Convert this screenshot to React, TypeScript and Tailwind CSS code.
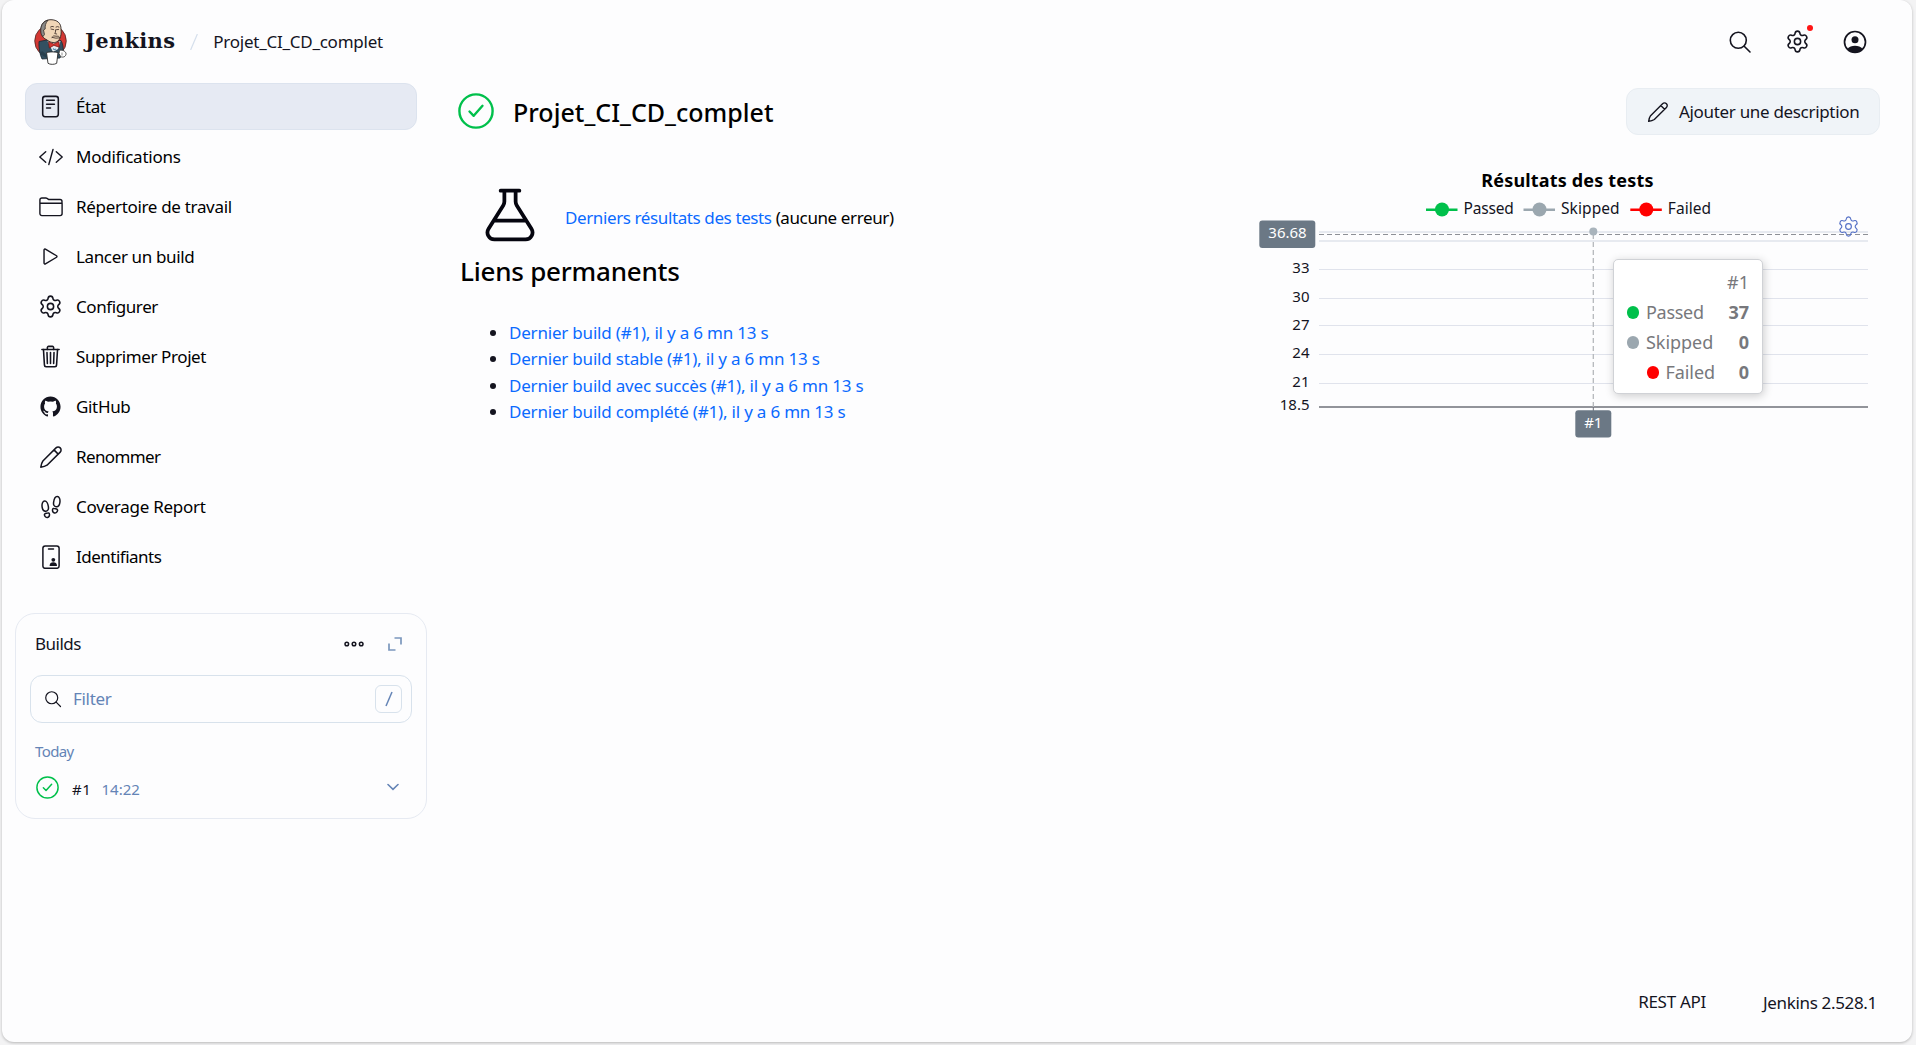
import React from 'react';
import { Settings } from 'lucide-react';
import {
  IoFlaskOutline,
  IoFootstepsOutline,
  IoLogoGithub,
  IoPlayOutline,
  IoReaderOutline,
  IoTrashOutline,
} from 'react-icons/io5';

function JenkinsLogo() {
  return (
    <svg viewBox="0 0 33 46" className="h-[46px] w-[33px] shrink-0">
      <ellipse cx="16.5" cy="22" rx="15.8" ry="16" fill="#d33833" stroke="#3a1f1c" strokeWidth=".7" />
      <path d="M5 22.5 L13 21 L20 23 L27 21.5 C29 25 29.5 29 29 33 L26 39 L8 40 C6 36 4.5 29 5 22.5 Z" fill="#335061" stroke="#1b2a33" strokeWidth=".8" />
      <path d="M13.5 22 L20 23 L26.5 22 L24 30 L19 33 Z" fill="#e9eef1" />
      <path d="M7 11 C6.500 4 11.500 .6 17 .7 C23 .8 27.300 4 27 10.500 C27.600 15 26.600 20.500 23 22.800 C20 24.300 15.500 23.500 12.500 20.500 C9 19.500 7 15.500 7 11 Z" fill="#f0d6b7" stroke="#2b2320" strokeWidth=".9" />
      <path d="M7 14 C6 6.500 9 2.500 14 1.300 C11.500 4 11 7 11.200 10 L9.500 11 L10.500 15.500 L9 17.500 C7.800 16.500 7.200 15.500 7 14 Z" fill="#8b8a88" stroke="#2b2320" strokeWidth=".7" />
      <path d="M17 10 l2.600 .6 M22 10.800 l2.600 -.4 M16.500 8 q1.500 -1.200 3 -.4 M22 8 q1.500 -1 3 0 M18 18.400 q1.500 -2.600 4 -1.200 q3 -.8 4 1.600 q-4 1 -8 -.4 M21.500 11 q.5 2.500 -.8 3.500 l2 .5" fill="none" stroke="#4a3a32" strokeWidth=".9" strokeLinecap="round" />
      <path d="M14.500 22.800 L19.800 25 L25 22.600 L25.300 28.200 L19.900 26.400 L15.300 29 Z" fill="#d33833" stroke="#6d1512" strokeWidth=".7" />
      <path d="M19 29.500 q2 2 3 .3" stroke="#5d8fb0" strokeWidth="1.200" fill="none" />
      <path d="M12.500 33.500 C15 32.700 21 32.700 24 33.500 L22.700 44.300 C20.500 45.700 16 45.700 14 44.300 Z" fill="#fff" stroke="#2b2b2b" strokeWidth=".9" />
      <path d="M25.500 31.500 C28 30.500 31.500 32 32 34.500 C32.200 37.500 29 39 26.500 37.500 L25 34.500 Z" fill="#fff" stroke="#3b3b3b" strokeWidth=".9" />
      <path d="M28 33.500 v3" stroke="#777" strokeWidth=".8" />
      <path d="M6 35 L12.800 39 L13 36 L8 32" fill="#28404e" />
    </svg>
  );
}

function CodeIcon() {
  return (
    <svg viewBox="0 0 24 24" className="size-6" fill="none" stroke="currentColor" strokeWidth="1.4" strokeLinecap="round" strokeLinejoin="round">
      <path d="M6.700 6.700 L.8 12 L6.700 17.300 M17.300 6.700 L23.200 12 L17.300 17.300 M14 4.500 L9.800 19.500" />
    </svg>
  );
}

function FolderIcon() {
  return (
    <svg viewBox="0 0 24 24" className="size-6" fill="none" stroke="currentColor" strokeWidth="1.4" strokeLinejoin="round">
      <path d="M.9 8.800 V5 a2 2 0 0 1 2 -2 H6.900 a2 2 0 0 1 1.200 .4 l1 .7 a2 2 0 0 0 1.200 .4 H21 a2 2 0 0 1 2 2 V8.800 M.9 8.300 H23.100 V18.600 a2 2 0 0 1 -2 2 H2.900 a2 2 0 0 1 -2 -2 Z" />
    </svg>
  );
}

function PencilIcon({ className }: { className: string }) {
  return (
    <svg viewBox="0 0 24 24" className={className} fill="none" stroke="currentColor" strokeWidth="1.500" strokeLinejoin="round">
      <path d="M1.800 22.200 C2.100 19.800 2.700 17.700 3.900 16 L17 2.900 a2.950 2.950 0 0 1 4.200 0 a2.950 2.950 0 0 1 0 4.200 L8 20.200 C6.300 21.300 4.200 21.900 1.800 22.200 Z M15 4.900 L19.200 9.100" />
    </svg>
  );
}

function BadgeIcon() {
  return (
    <svg viewBox="0 0 24 24" className="size-6" fill="none" stroke="currentColor" strokeWidth="1.500" strokeLinecap="round">
      <rect x="3.900" y=".9" width="16.200" height="22.400" rx="2.300" />
      <path d="M9.500 4 H14.500" />
      <circle cx="14.300" cy="14.800" r="1.900" fill="currentColor" stroke="none" />
      <path d="M10.600 20.900 c0 -2.700 1.500 -3.700 3.700 -3.700 s3.700 1 3.700 3.700 z" fill="currentColor" stroke="none" />
    </svg>
  );
}

function SearchIcon({ className }: { className: string }) {
  return (
    <svg viewBox="0 0 24 24" className={className} fill="none" stroke="currentColor" strokeWidth="1.600" strokeLinecap="round">
      <circle cx="10.300" cy="10.300" r="8" />
      <path d="M16.200 16.200 L22 22" />
    </svg>
  );
}

function UserIcon() {
  return (
    <svg viewBox="0 0 24 24" className="size-6">
      <circle cx="12" cy="12" r="10.500" fill="none" stroke="currentColor" strokeWidth="1.700" />
      <circle cx="12" cy="9.800" r="3.500" fill="currentColor" />
      <path d="M4.300 19 C6 16.800 9 15.800 12 15.800 S18 16.800 19.700 19 C17.800 21.400 15 22.700 12 22.700 S6.200 21.400 4.300 19 Z" fill="currentColor" />
    </svg>
  );
}

function SuccessIcon({ className, width }: { className: string; width: number }) {
  return (
    <svg viewBox="0 0 36 36" className={className} fill="none" stroke="#00c04b" strokeWidth={width} strokeLinecap="round" strokeLinejoin="round">
      <circle cx="18" cy="18" r="16.600" />
      <path d="M11.500 18.500 L15.700 22.800 L24.500 12.800" />
    </svg>
  );
}

const menu = [
  { label: 'État', tracking: 'tracking-[-0.45px]', icon: <IoReaderOutline className="size-[25px]" />, active: true },
  { label: 'Modifications', tracking: 'tracking-[-0.26px]', icon: <CodeIcon /> },
  { label: 'Répertoire de travail', tracking: 'tracking-[-0.32px]', icon: <FolderIcon /> },
  { label: 'Lancer un build', tracking: 'tracking-[-0.36px]', icon: <IoPlayOutline className="size-[23px]" /> },
  { label: 'Configurer', tracking: 'tracking-[-0.41px]', icon: <Settings className="size-[25px]" strokeWidth={1.5} /> },
  { label: 'Supprimer Projet', tracking: 'tracking-[-0.4px]', icon: <IoTrashOutline className="size-[25px]" /> },
  { label: 'GitHub', tracking: 'tracking-[-0.34px]', icon: <IoLogoGithub className="size-[23px]" /> },
  { label: 'Renommer', tracking: 'tracking-[-0.62px]', icon: <PencilIcon className="size-6" /> },
  { label: 'Coverage Report', tracking: 'tracking-[-0.27px]', icon: <IoFootstepsOutline className="size-6" /> },
  { label: 'Identifiants', tracking: 'tracking-[-0.5px]', icon: <BadgeIcon /> },
];

const permalinks = [
  'Dernier build (#1), il y a 6 mn 13 s',
  'Dernier build stable (#1), il y a 6 mn 13 s',
  'Dernier build avec succès (#1), il y a 6 mn 13 s',
  'Dernier build complété (#1), il y a 6 mn 13 s',
];

const ticks = [
  { label: '33', y: 273, line: 269.5 },
  { label: '30', y: 302, line: 298.5 },
  { label: '27', y: 330, line: 325.5 },
  { label: '24', y: 358, line: 354.5 },
  { label: '21', y: 387, line: 383.5 },
];

const legend = [
  { label: 'Passed', x: 1442, color: '#00c04b', tracking: 'tracking-[-0.17px]' },
  { label: 'Skipped', x: 1539.5, color: '#9ba7af', tracking: 'tracking-[0.08px]' },
  { label: 'Failed', x: 1646.3, color: '#ff0000', tracking: 'tracking-[0.06px]' },
];

function Header() {
  return (
    <header className="flex h-[83px] items-center pr-[45px] pl-8">
      <JenkinsLogo />
      <span className="-mt-[3px] ml-[18px] font-['DejaVu_Serif'] text-[21px] leading-none font-bold tracking-[0.3px]">Jenkins</span>
      <svg viewBox="0 0 8 16" className="ml-[15px] h-4 w-2" stroke="#d5dfec" strokeWidth="1.200">
        <path d="M.6 16 L7.400 0" />
      </svg>
      <span className="ml-[15px] tracking-[-0.25px]">Projet_CI_CD_complet</span>
      <div className="ml-auto flex items-center gap-[33px]">
        <SearchIcon className="size-6" />
        <span className="relative">
          <Settings className="size-[25px]" strokeWidth={1.5} />
          <span className="absolute top-[-4px] right-[-3px] size-[6px] rounded-full bg-[#ff1515]" />
        </span>
        <UserIcon />
      </div>
    </header>
  );
}

function Builds() {
  return (
    <section className="mt-[33px] -ml-[10px] h-[206px] w-[412px] rounded-[20px] border border-[#e6eaf2] px-[14px]">
      <div className="flex h-[61px] items-center px-1 pb-[2px]">
        <h2 className="ml-px tracking-[-0.5px]">Builds</h2>
        <svg viewBox="0 0 20 8" className="ml-auto h-2 w-5" fill="none" stroke="currentColor" strokeWidth="1.500">
          <circle cx="2.800" cy="4" r="1.800" />
          <circle cx="10" cy="4" r="1.800" />
          <circle cx="17.200" cy="4" r="1.800" />
        </svg>
        <svg viewBox="0 0 14 14" className="mr-[6px] ml-6 size-[14px]" fill="none" stroke="#7b97bd" strokeWidth="1.700">
          <path d="M6.500 1 H13 V7.500 M1 6.500 V13 H7.500" />
        </svg>
      </div>
      <div className="flex h-12 items-center rounded-xl border border-[#d8e2ec] pr-[9px] pl-[13px] text-[#6484b6]">
        <SearchIcon className="size-[18px] text-[#14141f]" />
        <span className="ml-[11px] tracking-[-0.32px]">Filter</span>
        <span className="ml-auto flex h-7 w-[27px] items-center justify-center rounded-md border border-[#d8e2ec]">
          <svg viewBox="0 0 8 16" className="h-4 w-2" stroke="currentColor" strokeWidth="1.500">
            <path d="M1 15 L7 1" />
          </svg>
        </span>
      </div>
      <p className="mt-4 px-[5px] text-[15px] leading-6 tracking-[-0.6px] text-[#6484b6]">Today</p>
      <div className="mt-[9px] flex items-center pr-[13px] pl-[6px] text-[15px]">
        <SuccessIcon className="size-[23px]" width={2.3} />
        <span className="ml-[13px] pt-1 tracking-[0.6px]">#1</span>
        <span className="ml-[10px] pt-1 text-[#6484b6]">14:22</span>
        <svg viewBox="0 0 12 8" className="ml-auto h-2 w-3" fill="none" stroke="#6484b6" strokeWidth="1.600" strokeLinecap="round">
          <path d="M1 1.500 L6 6.300 L11 1.500" />
        </svg>
      </div>
    </section>
  );
}

function TrendChart() {
  return (
    <svg viewBox="1250 160 630 285" className="h-[285px] w-[630px]" fill="#14141f">
      <text x="1567.500" y="187" textAnchor="middle" fill="#000" className="text-[18px] font-bold tracking-[0.17px]">Résultats des tests</text>
      {legend.map((l) => (
        <g key={l.label}>
          <rect x={l.x - 16} y="208.500" width="31.500" height="2.500" fill={l.color} />
          <circle cx={l.x} cy="209.500" r="7" fill={l.color} />
          <text x={l.x + 21.500} y="214" className={`text-[15.5px] ${l.tracking}`}>{l.label}</text>
        </g>
      ))}
      <g stroke="#e0e3ec" strokeWidth="1">
        <path d="M1319 232 H1868 M1319 241 H1868" strokeWidth="1.500" />
        {ticks.map((t) => <path key={t.label} d={`M1319 ${t.line} H1868`} />)}
      </g>
      {ticks.map((t) => (
        <text key={t.label} x="1309.500" y={t.y} textAnchor="end" className="text-[15px]">{t.label}</text>
      ))}
      <text x="1309.500" y="410" textAnchor="end" className="text-[15px]">18.5</text>
      <path d="M1319 407 H1868" stroke="#6e7079" strokeWidth="1.500" />
      <path d="M1319 234.500 H1868" stroke="#8d9096" strokeDasharray="5 3" />
      <path d="M1593.300 407 V232" stroke="#b5b8bc" strokeWidth="1.300" strokeDasharray="5 3" />
      <path d="M1593.300 407 V411" stroke="#6e7079" />
      <circle cx="1593.300" cy="231.500" r="4" fill="#a9b4bc" />
      <rect x="1259.300" y="220.500" width="56" height="27.500" rx="3" fill="#6b7885" />
      <text x="1287.500" y="238" textAnchor="middle" fill="#fff" className="text-[15px]">36.68</text>
      <rect x="1575.300" y="410.300" width="36" height="27.300" rx="3" fill="#6b7885" />
      <text x="1593.300" y="428" textAnchor="middle" fill="#fff" className="text-[15px]">#1</text>
    </svg>
  );
}

function TooltipRow({ label, value, dot, end, tracking }: { label: string; value: string; dot: string; end?: boolean; tracking: string }) {
  return (
    <div className="flex h-[30px] items-center">
      <span className={`flex w-[88px] items-center gap-[7px] whitespace-nowrap ${end ? 'justify-end' : ''}`}>
        <span className={`h-[13px] w-3 rounded-full ${dot}`} />
        <span className={tracking}>{label}</span>
      </span>
      <b className="ml-auto">{value}</b>
    </div>
  );
}

function TestTrend() {
  return (
    <div className="relative mt-[20px] self-start">
      <TrendChart />
      <Settings className="absolute top-[55px] left-[587px] size-[23px] text-[#5470c6]" strokeWidth={1.2} />
      <div className="absolute top-[99px] left-[363px] h-[135px] w-[150px] rounded-[5px] border border-[#d0d2d6] bg-white px-[13px] pt-[7px] text-[18px] text-[#77787c] shadow-[1px_2px_10px_rgba(0,0,0,0.2)]">
        <p className="h-[30px] text-right leading-[30px]">#1</p>
        <TooltipRow label="Passed" value="37" dot="bg-[#00c04b]" tracking="tracking-[-0.3px]" />
        <TooltipRow label="Skipped" value="0" dot="bg-[#9ba7af]" tracking="tracking-[-0.05px]" />
        <TooltipRow label="Failed" value="0" dot="bg-[#ff0000]" tracking="tracking-[-0.08px]" end />
      </div>
    </div>
  );
}

export default function App() {
  return (
    <div className="h-[1045px] bg-[#f3f3f4] pr-1 pl-[2px] font-['Noto_Sans',sans-serif] text-[17px] leading-[26px] text-[#14141f]">
      <div className="flex h-[1042px] flex-col rounded-xl bg-[#fdfdfe] shadow-[0_1px_3px_rgba(0,0,0,0.25)]">
        <Header />
        <div className="flex flex-1">
          <aside className="w-[415px] pl-[23px]">
            <nav className="flex flex-col gap-[3px]">
              {menu.map((m) => (
                <a
                  key={m.label}
                  className={`flex h-[47px] w-[392px] items-center rounded-xl border pl-3 text-black ${m.active ? 'border-[#dce3ee] bg-[#e6eaf3]' : 'border-transparent'}`}
                >
                  <span className="flex size-[25px] items-center justify-center text-[#14141f]">{m.icon}</span>
                  <span className={`ml-[13px] ${m.tracking}`}>{m.label}</span>
                </a>
              ))}
            </nav>
            <Builds />
          </aside>
          <div className="flex flex-1 flex-col pr-8 pl-[41px]">
            <div className="flex h-[57px] items-center">
              <SuccessIcon className="-mt-[2px] size-9" width={2.4} />
              <h1 className="ml-[19px] text-[25px] font-medium tracking-[0.02px] text-black">Projet_CI_CD_complet</h1>
              <button className="ml-auto flex h-[47px] w-[254px] items-center rounded-xl border border-[#e8edf2] bg-[#f0f4f8] pl-5">
                <PencilIcon className="size-[22px]" />
                <span className="ml-[10px] tracking-[-0.32px]">Ajouter une description</span>
              </button>
            </div>
            <div className="flex">
              <div className="flex-1">
                <div className="mt-[44px] flex h-[61px] items-center">
                  <IoFlaskOutline className="ml-[22px] size-[60px] text-[#05050f]" />
                  <p className="ml-[25px] pt-[7px] tracking-[-0.39px] text-black">
                    <a className="text-[#0b6aff]">Derniers résultats des tests</a> (aucune erreur)
                  </p>
                </div>
                <h2 className="mt-2 ml-[2px] text-[26px] leading-9 font-medium tracking-[-0.22px] text-black">Liens permanents</h2>
                <ul className="mt-[31px] list-disc pl-[51px]">
                  {permalinks.map((p) => (
                    <li key={p} className="h-[26.3px]">
                      <a className="tracking-[-0.2px] text-[#0b6aff]">{p}</a>
                    </li>
                  ))}
                </ul>
              </div>
              <TestTrend />
            </div>
          </div>
        </div>
        <footer className="flex h-[53px] justify-end gap-[57px] pr-[35px]">
          <span className="tracking-[-0.3px]">REST API</span>
          <span className="pt-px tracking-[-0.33px]">Jenkins 2.528.1</span>
        </footer>
      </div>
    </div>
  );
}
